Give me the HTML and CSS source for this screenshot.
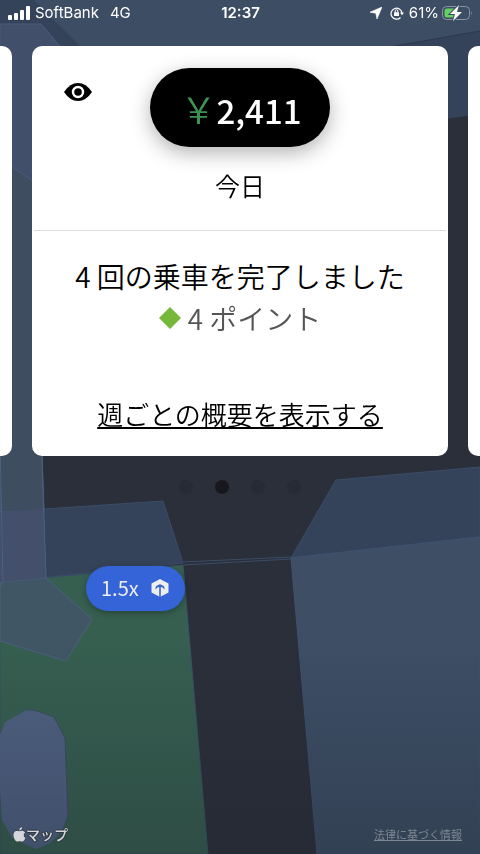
FILE: index.html
```
<!DOCTYPE html>
<html lang="ja">
<head>
    <meta charset="UTF-8">
    <meta name="viewport" content="width=device-width, initial-scale=1.0">
    <title>今日の売上</title>
    <link rel="stylesheet" href="styles.css">
</head>
<body>
    <!-- map background -->
    <svg class="map" viewBox="0 0 480 854" preserveAspectRatio="xMidYMid slice" aria-hidden="true">
        <defs>
            <linearGradient id="shade" x1="0" y1="0" x2="0" y2="1">
                <stop offset="0" stop-color="#1a1f2a" stop-opacity="0"/>
                <stop offset="1" stop-color="#1a1f2a" stop-opacity="0.28"/>
            </linearGradient>
        </defs>
        <rect width="480" height="854" fill="#2b2f3a"/>
        <path d="M0 0H480V60L300 100H0Z" fill="#3d4d63"/>
        <path d="M480 31L395 46L300 62V140L480 114Z" fill="#35435a"/>
        <path d="M480 31L395 46" stroke="#2d394d"/>
        <path d="M34 0L80 46L100 66H70L60 46L40 24H0V0Z" fill="#35435a"/>
        <path d="M0 512L163 501L183 563L0 582Z" fill="#35435a" stroke="#3a4d68"/>
        <path d="M480 467L336 480L291 558L480 537Z" fill="#35435a" stroke="#3a4d68"/>
        <path d="M291 558L480 537V854H317Z" fill="#3d4e65" stroke="#3f5370"/>
        <path d="M0 582L183 565L208 854H0Z" fill="#365f50" stroke="#3b5067"/>
        <path d="M183 562L291 557M183 565L291 559" stroke="#3a4d68" fill="none"/>
        <path d="M0 140H40L42 456L44 512H0Z" fill="#3e4d5f" stroke="#4a5f7c"/>
        <path d="M0 24H41L60 46L80 70V190H45L0 158Z" fill="#424f6a" stroke="#4a5b7a"/>
        <path d="M0 582L46 578L92 619L66 661L0 641Z" fill="#415664" stroke="#4a6180"/>
        <path d="M0 512L44 509L46 578L0 582Z" fill="#434f6b"/>
        <path d="M0 440L3 582L0 586M42 456L46 578" fill="none" stroke="#4a6180"/>
        <path d="M0 735L5 722L27 710L34 710L54 717L65 738L68 816L62 832L50 843L36 849L12 838L2 820L0 790Z" fill="#4f6283"/>
        <path d="M27 710L34 710L54 717L65 738L68 816L62 832" fill="none" stroke="#3c4d66"/>
        <rect y="640" width="480" height="214" fill="url(#shade)"/>
    </svg>

    <div class="screen">
        <header class="status">
            <div class="carrier">
                <svg width="22" height="14" viewBox="0 0 22 14" fill="#fff" aria-hidden="true">
                    <rect x="0" y="9" width="4" height="5" rx="1"/>
                    <rect x="6" y="7" width="4" height="7" rx="1"/>
                    <rect x="12" y="4" width="4" height="10" rx="1"/>
                    <rect x="18" y="0" width="4" height="14" rx="1"/>
                </svg>
                <span>SoftBank</span>
                <span class="network">4G</span>
            </div>
            <time class="clock">12:37</time>
            <div class="battery">
                <svg width="12" height="12" viewBox="0 0 12 12" fill="#fff" aria-hidden="true">
                    <path d="M12 0L7 12L5.800 6.200L0 5.200Z" stroke="#fff" stroke-width="0.600" stroke-linejoin="round"/>
                </svg>
                <svg class="lock" width="14" height="14" viewBox="0 0 14 14" fill="none" stroke="#fff" aria-hidden="true">
                    <path d="M10.500 11.500A5.500 5.500 0 1 1 12 7" stroke-width="1.200"/>
                    <path d="M10 6.500H14L12 9.200Z" fill="#fff" stroke="none"/>
                    <rect x="4" y="6.200" width="5" height="3.800" rx="0.500" fill="#fff" stroke="none"/>
                    <path d="M5.200 6.500V5a1.300 1.300 0 0 1 2.600 0V6.500"/>
                </svg>
                <span>61%</span>
                <svg class="level" width="31" height="16" viewBox="0 0 31 16" aria-hidden="true">
                    <rect x="0.500" y="1.500" width="27" height="13" rx="4" fill="none" stroke="#8995a5"/>
                    <path d="M29 5.500Q30.500 8 29 10.500Z" fill="#8995a5"/>
                    <path d="M5 3.500H16V12.500H5Q2.500 12.500 2.500 10V6Q2.500 3.500 5 3.500Z" fill="#65d15f"/>
                    <path d="M17 0L8 9H13L11 16L20 7H15Z" fill="#fff" stroke="#3d4d63" stroke-width="2" paint-order="stroke"/>
                </svg>
            </div>
        </header>

        <main>
            <div class="slider">
                <div class="card side"></div>
                <section class="card">
                    <div class="cardTop">
                        <button class="eye" aria-label="売上を隠す">
                            <svg width="28" height="18" viewBox="0 0 28 18" aria-hidden="true">
                                <path d="M0 9Q6 0 14 0T28 9Q22 18 14 18T0 9Z" fill="#000"/>
                                <circle cx="14" cy="9" r="5" fill="#000" stroke="#fff" stroke-width="2.400"/>
                            </svg>
                        </button>
                        <button class="amount"><span class="yen">￥</span>2,411</button>
                        <h1>今日</h1>
                    </div>
                    <div class="cardBody">
                        <p class="rides">4 回の乗車を完了しました</p>
                        <p class="points">
                            <svg width="22" height="22" viewBox="0 0 22 22" aria-hidden="true"><path d="M11 0L22 11L11 22L0 11Z" fill="#76b83a"/></svg>
                            4 ポイント
                        </p>
                        <a href="#" class="weekly">週ごとの概要を表示する</a>
                    </div>
                </section>
                <div class="card side"></div>
            </div>

            <nav class="dots" aria-label="カード">
                <button aria-label="1"></button>
                <button class="current" aria-label="2"></button>
                <button aria-label="3"></button>
                <button aria-label="4"></button>
            </nav>
        </main>

        <footer>
            <div class="logo">
                <svg width="13" height="15" viewBox="0 0 13 15" aria-hidden="true">
                    <path d="M6.500 4.200C5 3.500 3.500 3.400 2.200 4.300C-0.300 6 0.200 10 1.700 12.500C2.700 14.300 3.800 15 5 14.500C6.200 14 7 14 8.200 14.500C10 15.200 11.800 13 12.500 10.800C10.300 9.800 10.200 6.900 12.100 5.700C10.700 3.500 8.500 3.400 6.500 4.200ZM6.300 3.500C6.200 1.700 7.500 0.300 9.200 0C9.400 1.800 8 3.400 6.300 3.500Z" fill="#d5d7da" stroke="#30373f" paint-order="stroke"/>
                </svg>
                <span>マップ</span>
            </div>
            <a href="#" class="legal">法律に基づく情報</a>
        </footer>
    </div>

    <!-- surge pin on the map -->
    <button class="surge">
        1.5x
        <svg width="18" height="18" viewBox="0 0 18 18" aria-hidden="true">
            <path d="M9 0L17.500 4.500V13.500L9 18L0.500 13.500V4.500Z" fill="#eeeef0"/>
            <path d="M9 18V7" fill="none" stroke="#3563d8" stroke-width="1.600"/>
            <path d="M4.500 10.500V8.500Q5 6.500 9 5.200Q13 6.500 13.500 8.500V10.500Q12 8 9 7.800Q6 8 4.500 10.500Z" fill="#3563d8"/>
        </svg>
    </button>
</body>
</html>
```
FILE: styles.css
```
*{
    margin: 0;
    padding: 0;
    box-sizing: border-box;
}
body{
    font-family: "Noto Sans CJK JP", sans-serif;
    background-color: #2b2f3a;
    color: #000;
    overflow: hidden;
}
button{
    border: none;
    font-family: inherit;
    cursor: pointer;
}
a{
    color: inherit;
}
svg{
    flex-shrink: 0;
}
.map{
    position: fixed;
    top: 0;
    left: 0;
    width: 100%;
    height: 100%;
}
.screen{
    position: relative;
    display: flex;
    flex-direction: column;
    min-height: 100vh;
}

/* status bar */
.status{
    display: grid;
    grid-template-columns: 1fr auto 1fr;
    align-items: center;
    padding: 3px 7px 3px 8px;
    height: 26px;
    color: #fff;
    font-family: Inter, sans-serif;
    font-size: 15px;
    line-height: 20px;
}
.carrier,
.battery{
    display: flex;
    align-items: center;
    gap: 5px;
}
.network{
    margin-left: 6px;
}
.clock{
    font-weight: 600;
}
.battery{
    justify-content: flex-end;
}
.lock{
    margin-left: 3px;
}
.level{
    margin-left: -2px;
}

/* cards */
.slider{
    display: grid;
    grid-template-columns: 12px 1fr 12px;
    column-gap: 20px;
    margin-top: 20px;
}
.card{
    background-color: #fff;
    border-radius: 10px;
    text-align: center;
}
.side:first-child{
    border-radius: 0 10px 10px 0;
}
.side:last-child{
    border-radius: 10px 0 0 10px;
}
.cardTop{
    position: relative;
    display: flex;
    flex-direction: column;
    align-items: center;
    gap: 20px;
    margin: 0 2px;
    padding: 22px 0 25px;
    border-bottom: 1px solid #ddd;
}
.eye{
    position: absolute;
    top: 37px;
    left: 30px;
    background: none;
}
.eye svg{
    display: block;
}
.amount{
    height: 79px;
    padding: 0 28px 0 30px;
    border-radius: 40px;
    background-color: #000;
    color: #fff;
    font-size: 33px;
    font-weight: 500;
    line-height: 80px;
    box-shadow: 0 6px 20px rgba(0,0,0,0.3);
}
.yen{
    color: #3d9452;
    font-size: 36px;
    font-weight: 350;
}
h1{
    font-size: 25px;
    font-weight: 350;
    line-height: 36px;
    padding-bottom: 2px;
}
.cardBody{
    display: flex;
    flex-direction: column;
    align-items: center;
    padding: 24px 0 23px;
}
.rides,
.points{
    font-size: 28px;
    font-weight: 350;
    line-height: 42px;
}
.points{
    display: flex;
    align-items: center;
    gap: 7px;
    color: #555;
}
.weekly{
    margin-top: 56px;
    font-size: 26px;
    font-weight: 350;
    line-height: 38px;
}

/* slider dots */
.dots{
    display: flex;
    justify-content: center;
    gap: 22px;
    margin-top: 24px;
}
.dots button{
    width: 14px;
    height: 14px;
    border-radius: 50%;
    background-color: #282a36;
}
.dots .current{
    background-color: #17181d;
}

.surge{
    position: absolute;
    top: 566px;
    left: 86px;
    display: flex;
    align-items: center;
    gap: 12px;
    height: 45px;
    padding: 0 16px 2px 15px;
    border-radius: 23px;
    background-color: #3563d8;
    color: #eeeef0;
    font-size: 20px;
    box-shadow: 0 2px 6px rgba(0,0,0,0.3);
}

footer{
    display: flex;
    justify-content: space-between;
    align-items: center;
    margin-top: auto;
    padding: 0 18px 8px 13px;
}
.logo{
    display: flex;
    align-items: center;
    color: #d5d7da;
    font-size: 14px;
    font-weight: 500;
    line-height: 24px;
    text-shadow: 1px 0 #30373f, -1px 0 #30373f, 0 1px #30373f, 0 -1px #30373f;
}
.legal{
    color: #7e8793;
    font-size: 11px;
    line-height: 20px;
}
```
